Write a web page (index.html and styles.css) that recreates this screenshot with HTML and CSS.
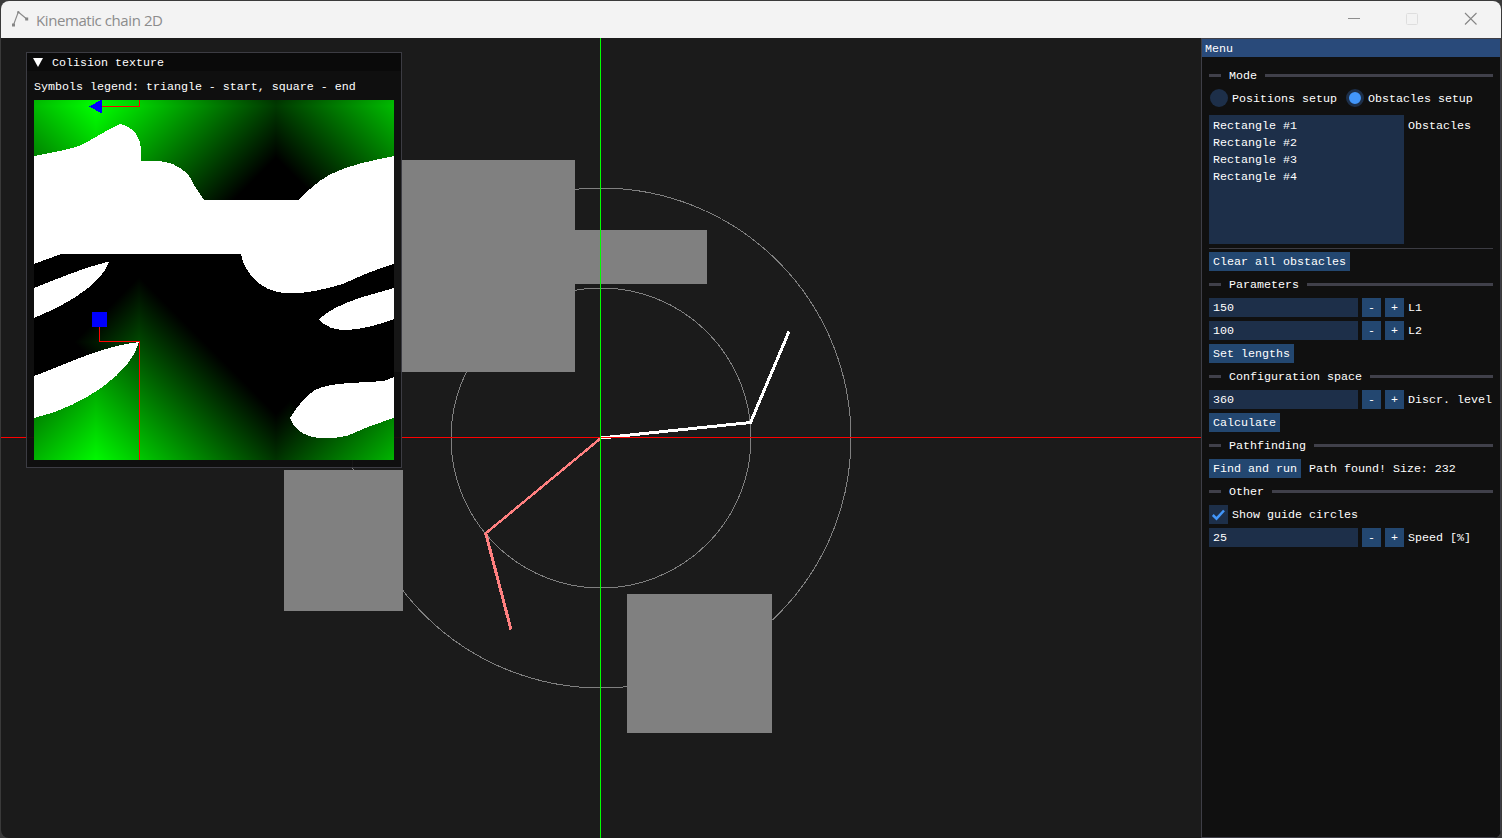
FILE: index.html
```html
<!DOCTYPE html>
<html lang="en">
<head>
<meta charset="utf-8">
<title>Kinematic chain 2D</title>
<link rel="stylesheet" href="styles.css">
</head>
<body>
<div class="window">
  <header class="titlebar">
    <svg class="app-icon" width="18" height="19" viewBox="0 0 18 19"><path d="M1.500 16 6.300 3 14.700 10" fill="none" stroke="#8a8a8a" stroke-width="1.100"/><path d="M0 14.500h3v3h-3zM13.200 8.500h3v3h-3zM5.300 2.200h2v2h-2z" fill="#858585"/></svg>
    <span class="app-title">Kinematic chain 2D</span>
    <div class="controls">
      <svg width="13" height="13" viewBox="0 0 13 13"><path d="M0 6.500h12" stroke="#8d8d8d"/></svg>
      <svg width="13" height="13" viewBox="0 0 13 13"><rect x="0.500" y="1.500" width="11" height="11" rx="1" fill="none" stroke="#dedede"/></svg>
      <svg width="13" height="13" viewBox="0 0 13 13"><path d="M1 1 12.500 12.500M12.500 1 1 12.500" stroke="#858585" stroke-width="1.100"/></svg>
    </div>
  </header>
  <main class="content">
    <section class="scene">
      <svg class="canvas" width="1200" height="800" viewBox="1 38 1200 800">
        <g fill="none" stroke="#808080" shape-rendering="crispEdges">
          <circle cx="601" cy="438" r="150"/>
          <circle cx="601" cy="438" r="250"/>
        </g>
        <g fill="#808080">
          <rect x="380" y="160" width="195" height="212"/>
          <rect x="560" y="230" width="147" height="54"/>
          <rect x="284" y="470" width="119" height="141"/>
          <rect x="627" y="594" width="145" height="139"/>
        </g>
        <g fill="none" shape-rendering="crispEdges">
          <path d="M601 438 485.500 533.500" stroke="#ff8080" stroke-width="2.400"/>
          <path d="M485.500 532.500 511 629.500" stroke="#ff8080" stroke-width="3"/>
          <path d="M601 438 750.500 422.500 789 331.500" stroke="#fff" stroke-width="3"/>
        </g>
        <rect x="1" y="437" width="1200" height="1" fill="#f00"/>
        <rect x="600" y="38" width="1" height="800" fill="#0f0"/>
      </svg>
      <aside class="texture-window">
        <div class="texture-title"><svg width="10" height="9" viewBox="0 0 10 9"><path d="M0 0h10L5 9z" fill="#fff"/></svg><span>Colision texture</span></div>
        <p class="legend">Symbols legend: triangle - start, square - end</p>
        <svg class="texture" width="360" height="360" viewBox="34 100 360 360" shape-rendering="crispEdges">
          <defs>
            <linearGradient id="a" gradientUnits="userSpaceOnUse" x1="96" y1="106" x2="-20" y2="222"><stop stop-color="#0f0"/><stop offset="1" stop-color="#000"/></linearGradient>
            <linearGradient id="b" gradientUnits="userSpaceOnUse" x1="96" y1="106" x2="212" y2="222"><stop stop-color="#0f0"/><stop offset="1" stop-color="#000"/></linearGradient>
            <linearGradient id="c" gradientUnits="userSpaceOnUse" x1="456" y1="106" x2="340" y2="222"><stop stop-color="#0f0"/><stop offset="1" stop-color="#000"/></linearGradient>
            <linearGradient id="a2" gradientUnits="userSpaceOnUse" x1="96" y1="106" x2="-20" y2="-10"><stop stop-color="#0f0"/><stop offset="1" stop-color="#000"/></linearGradient>
            <linearGradient id="b2" gradientUnits="userSpaceOnUse" x1="96" y1="106" x2="212" y2="-10"><stop stop-color="#0f0"/><stop offset="1" stop-color="#000"/></linearGradient>
            <linearGradient id="c2" gradientUnits="userSpaceOnUse" x1="456" y1="106" x2="340" y2="-10"><stop stop-color="#0f0"/><stop offset="1" stop-color="#000"/></linearGradient>
            <linearGradient id="d" gradientUnits="userSpaceOnUse" x1="96" y1="466" x2="-20" y2="350"><stop stop-color="#0f0"/><stop offset="1" stop-color="#000"/></linearGradient>
            <linearGradient id="e" gradientUnits="userSpaceOnUse" x1="96" y1="466" x2="212" y2="350"><stop stop-color="#0f0"/><stop offset="1" stop-color="#000"/></linearGradient>
            <linearGradient id="f" gradientUnits="userSpaceOnUse" x1="456" y1="466" x2="340" y2="350"><stop stop-color="#0f0"/><stop offset="1" stop-color="#000"/></linearGradient>
            <linearGradient id="f2" gradientUnits="userSpaceOnUse" x1="124" y1="466" x2="240" y2="350"><stop stop-color="#0f0"/><stop offset="1" stop-color="#000"/></linearGradient>
            <linearGradient id="g" gradientUnits="userSpaceOnUse" x1="139" y1="342" x2="106.500" y2="309.500"><stop stop-color="#004700"/><stop offset="1" stop-color="#000"/></linearGradient>
            <linearGradient id="h" gradientUnits="userSpaceOnUse" x1="139" y1="342" x2="106.500" y2="374.500"><stop stop-color="#004700"/><stop offset="1" stop-color="#000"/></linearGradient>
          </defs>
          <rect x="34" y="100" width="360" height="360" fill="#000"/>
          <rect x="34" y="106" width="62" height="94" fill="url(#a)"/>
          <rect x="96" y="106" width="180" height="94" fill="url(#b)"/>
          <rect x="276" y="106" width="118" height="94" fill="url(#c)"/>
          <rect x="34" y="100" width="62" height="6" fill="url(#a2)"/>
          <rect x="96" y="100" width="180" height="6" fill="url(#b2)"/>
          <rect x="276" y="100" width="118" height="6" fill="url(#c2)"/>
          <rect x="139" y="254" width="137" height="206" fill="url(#e)"/>
          <rect x="34" y="254" width="105" height="88" fill="url(#g)"/>
          <rect x="34" y="342" width="105" height="60" fill="url(#h)"/>
          <path d="M34 400 96 390V460H34z" fill="url(#d)"/>
          <path d="M96 388 139 345V460H96z" fill="url(#e)"/>
          <path d="M276 300H290V418H394V460H276z" fill="url(#f)"/>
          <rect x="290" y="300" width="104" height="118" fill="url(#f2)"/>
          <g fill="#fff">
            <path d="M34 156C50 153 67 150 79 146C94 139 106 130 120 124C127 125 132 129 136 134C142 143 141 150 141 161C157 160 170 161 180 168C189 174 191 178 194 185L204 200H299C308 190 317 182 329 175C348 165 370 161 394 156V264C376 269 358 277 343 284C328 288 311 293 292 293.500C279 293 269 291 260 284C250 276 243 266 241 254H61L34 264z"/>
            <path d="M34 288C57 279 82 268 109 261.500C104 279 78 300 34 318z"/>
            <path d="M34 376C67 364 102 346 139 342C132 371 86 406 34 418z"/>
            <path d="M394 288C370 295 338 302 319 319C325 327 334 330 347 330C363 329 378 325 394 319z"/>
            <path d="M394 377 384 381 350 383C337 384 325 385 315 390C305 396 297 407 290 418C295 432 308 438 325 438.500C337 438 346 437 354 433C366 427 379 423 394 418z"/>
          </g>
          <path d="M102 106.500H139.500V100M99.500 327V341.500H139.500V460" fill="none" stroke="#f00"/>
          <path d="M89 106.500 102 99.500V113.500z" fill="#00f"/>
          <rect x="92" y="312" width="15" height="15" fill="#00f"/>
        </svg>
      </aside>
    </section>
    <aside class="menu">
      <div class="menu-title">Menu</div>
      <div class="menu-body">
        <div class="separator"><span>Mode</span></div>
        <div class="row">
          <span class="radio"></span><span class="after">Positions setup</span>
          <span class="radio selected"></span><span class="after">Obstacles setup</span>
        </div>
        <div class="row list-row">
          <ul class="list"><li>Rectangle #1</li><li>Rectangle #2</li><li>Rectangle #3</li><li>Rectangle #4</li></ul>
          <span class="after">Obstacles</span>
        </div>
        <div class="rule"></div>
        <div class="button">Clear all obstacles</div>
        <div class="separator"><span>Parameters</span></div>
        <div class="row"><span class="input">150</span><span class="step">-</span><span class="step">+</span><span class="after">L1</span></div>
        <div class="row"><span class="input">100</span><span class="step">-</span><span class="step">+</span><span class="after">L2</span></div>
        <div class="button">Set lengths</div>
        <div class="separator"><span>Configuration space</span></div>
        <div class="row"><span class="input">360</span><span class="step">-</span><span class="step">+</span><span class="after">Discr. level</span></div>
        <div class="button">Calculate</div>
        <div class="separator"><span>Pathfinding</span></div>
        <div class="row"><span class="button">Find and run</span><span class="after status">Path found! Size: 232</span></div>
        <div class="separator"><span>Other</span></div>
        <div class="row"><span class="check"><svg width="19" height="19" viewBox="0 0 19 19"><path d="M3.800 10 7.500 13.700 15 5.500" fill="none" stroke="#4296fa" stroke-width="2.500"/></svg></span><span class="after">Show guide circles</span></div>
        <div class="row"><span class="input">25</span><span class="step">-</span><span class="step">+</span><span class="after">Speed [%]</span></div>
      </div>
    </aside>
  </main>
</div>
</body>
</html>
```
FILE: styles.css
```css
* { box-sizing: border-box; }

body {
  margin: 0;
  width: 1502px;
  height: 838px;
  padding: 1px 1px 0;
  overflow: hidden;
  background: #3a3a3a;
  color: #fff;
  font: 11.667px/13px "Liberation Mono", monospace;
}

.window, .titlebar, .controls, .content, .scene, .menu, .menu-body, .row, .texture-title { display: flex; }

svg { display: block; flex: none; }

.window {
  flex-direction: column;
  height: 837px;
  overflow: hidden;
  border-radius: 8px;
  background: #1b1b1b;
}

.titlebar {
  flex: none;
  align-items: center;
  height: 37px;
  padding: 0 24px 2px 11px;
  background: #f3f3f3;
}

.app-title {
  margin-left: 6px;
  padding-top: 2px;
  color: #8c8c8c;
  font: 15px/20px "Open Sans", sans-serif;
  letter-spacing: -0.42px;
}

.controls { gap: 45px; margin-left: auto; }

.content { height: 800px; }

.scene { position: relative; width: 1200px; }

.texture-window {
  position: absolute;
  left: 25px;
  top: 14px;
  width: 376px;
  height: 416px;
  border: 1px solid #3c3c43;
  background: rgba(15, 15, 15, 0.94);
}

.texture-title {
  align-items: center;
  gap: 9px;
  height: 18px;
  padding-left: 6px;
  background: #0a0a0a;
}

.texture-title span { padding-top: 2px; }

.legend { margin: 10px 0 6px 7px; height: 13px; white-space: nowrap; }

.texture { margin-left: 7px; }

.menu {
  flex-direction: column;
  width: 300px;
  border: 1px solid #3e3e46;
  background: #101010;
  white-space: nowrap;
}

.menu-title {
  height: 18px;
  padding: 4px 3px 0;
  background: #294a7a;
}

.menu-body {
  flex-direction: column;
  align-items: flex-start;
  gap: 4px;
  padding: 9px 7px;
}

.separator {
  display: flex;
  align-items: center;
  gap: 8px;
  width: 284px;
  height: 19px;
}

.separator span { padding-top: 2px; }

.separator::before, .separator::after {
  content: "";
  width: 12px;
  height: 3px;
  background: #40404a;
}

.separator::after { flex: 1; }

.row { align-items: center; height: 19px; }

.after { margin-left: 4px; padding-top: 2px; }

.status { margin-left: 8px; }

.radio {
  width: 18px;
  height: 18px;
  margin: 0 0 1px 1px;
  border-radius: 50%;
  background: #1d2f49;
}

.after + .radio { margin-left: 9px; }

.selected { border: 3px solid #1d2f49; background: #4296fa; }

.list-row { align-items: flex-start; height: 129px; margin-top: 3px; }

.list-row .after { margin-top: 3px; }

.list {
  width: 195px;
  height: 129px;
  margin: 0;
  padding: 5px 4px;
  background: #1d2f49;
  list-style: none;
}

.list li { height: 17px; }

.rule { width: 284px; height: 1px; margin-bottom: -1px; background: #3c3c43; }

.button {
  height: 19px;
  padding: 4px 4px 0;
  background: #234770;
}

.input {
  width: 149px;
  height: 19px;
  padding: 4px 4px 0;
  background: #1d2f49;
}

.step {
  width: 19px;
  height: 19px;
  margin-left: 4px;
  padding-top: 4px;
  background: #234770;
  text-align: center;
}

.check { width: 19px; height: 19px; background: #1d2f49; }
```
